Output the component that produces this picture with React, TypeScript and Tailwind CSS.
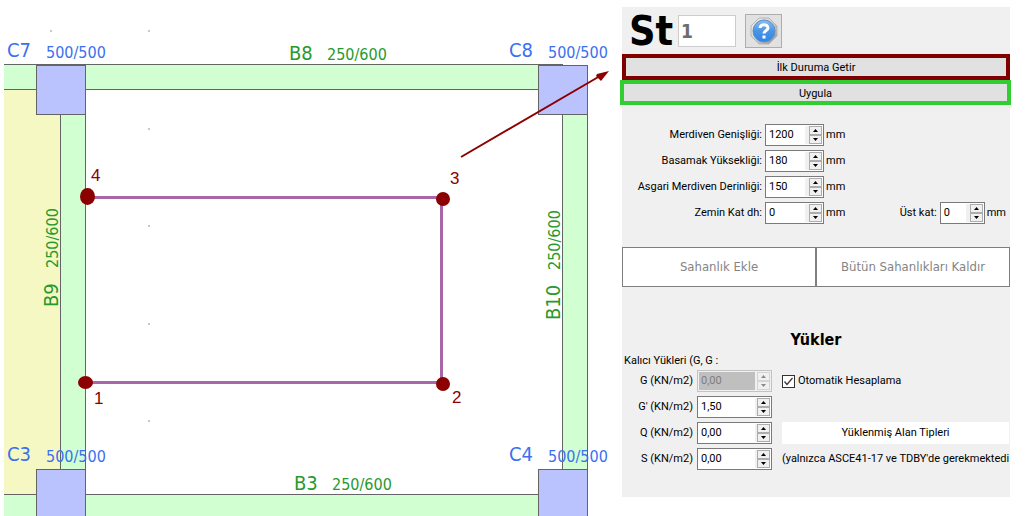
import type { ReactNode } from "react"

const beams = [
  { name: "B8", size: "250/600", x: 289, y: 60, gap: 38, vertical: false },
  { name: "B3", size: "250/600", x: 294, y: 490, gap: 38, vertical: false },
  { name: "B9", size: "250/600", x: 58, y: 307, gap: 39, vertical: true },
  { name: "B10", size: "250/600", x: 560, y: 320, gap: 50, vertical: true },
]

const columns = [
  { name: "C7", x: 7, y: 58 },
  { name: "C8", x: 509, y: 58 },
  { name: "C3", x: 7, y: 462 },
  { name: "C4", x: 509, y: 462 },
]

const corners = [
  { id: 1, x: 85.5, y: 382.5, rx: 7.5, ry: 6.5, tx: 94, ty: 404 },
  { id: 2, x: 443, y: 384, rx: 7, ry: 7, tx: 452, ty: 403 },
  { id: 3, x: 443, y: 199, rx: 7, ry: 7, tx: 450, ty: 184 },
  { id: 4, x: 87.5, y: 196.5, rx: 7.5, ry: 8.5, tx: 91, ty: 181 },
]

function FloorPlan() {
  return (
    <svg
      width="620"
      height="516"
      viewBox="0 0 620 516"
      className="shrink-0"
      role="img"
      aria-label="Kat planı"
    >
      <g shapeRendering="crispEdges">
        {/* Slab and beams */}
        <rect x="4" y="90" width="57" height="404" fill="#f6f8c4" />
        <rect x="4" y="65" width="559" height="24" fill="#d1ffd1" />
        <rect x="4" y="495" width="559" height="21" fill="#d1ffd1" />
        <rect x="61" y="90" width="24" height="404" fill="#d1ffd1" />
        <rect x="563" y="90" width="24" height="404" fill="#d1ffd1" />
        <path
          d="M4 64.5H563M4 89.5H538M4 494.5H538M60.5 115V469M85.5 90V494M562.5 115V469M587.5 115V469"
          stroke="#646464"
          fill="none"
        />

        {/* Columns */}
        {[
          [36.5, 65.5],
          [538.5, 65.5],
          [36.5, 469.5],
          [538.5, 469.5],
        ].map(([x, y]) => (
          <rect key={`${x}-${y}`} x={x} y={y} width="49" height="49" fill="#bbc3ff" stroke="#646464" />
        ))}

        {/* Grid dots */}
        {[
          [50, 30],
          [148, 30],
          [148, 128],
          [148, 225],
          [148, 323],
          [148, 420],
        ].map(([x, y]) => (
          <rect key={`${x}-${y}`} x={x} y={y} width="2" height="2" fill="#c8c8c8" />
        ))}

        <path d="M88 197.5H441.5V382.5H86" stroke="#a868a8" strokeWidth="3" fill="none" />
      </g>

      {/* Labels */}
      <g className="font-['DejaVu_Sans_Condensed','DejaVu_Sans',sans-serif]" fill="#3b70f0">
        {columns.map((c) => (
          <g key={c.name}>
            <text x={c.x} y={c.y - 1} fontSize="20">{c.name}</text>
            <text x={c.x + 39} y={c.y} fontSize="16">500/500</text>
          </g>
        ))}
      </g>
      <g className="font-['DejaVu_Sans_Condensed','DejaVu_Sans',sans-serif]" fill="#279a2c">
        {beams.map((b) => (
          <g key={b.name} transform={`translate(${b.x} ${b.y})${b.vertical ? " rotate(-90)" : ""}`}>
            <text fontSize="20">{b.name}</text>
            <text x={b.gap} fontSize="16">{b.size}</text>
          </g>
        ))}
      </g>

      {/* Stair corners */}
      <g fill="#8b0000" className="font-['Liberation_Sans',Arial,sans-serif]">
        {corners.map((p) => (
          <g key={p.id}>
            <ellipse cx={p.x} cy={p.y} rx={p.rx} ry={p.ry} />
            <text x={p.tx} y={p.ty} fontSize="17">{p.id}</text>
          </g>
        ))}
        <path d="M461 157L600 76" stroke="#8b0000" strokeWidth="2" />
        <path d="M609 71L601 81L599 79L596 76L597 74Z" />
      </g>
    </svg>
  )
}

type SpinnerProps = {
  id: string
  value: string
  size?: "sm" | "md" | "lg"
  disabled?: boolean
}

const spinnerWidths = { sm: "w-[45px]", md: "w-[59px]", lg: "w-[75px]" }

function Spinner({ id, value, size = "md", disabled = false }: SpinnerProps) {
  return (
    <div
      className={`flex h-[22px] shrink-0 border p-px ${spinnerWidths[size]} ${
        disabled ? "border-[#c3c3c3] bg-[#f0f0f0]" : "border-[#7a7a7a] bg-white"
      }`}
    >
      <input
        id={id}
        type="text"
        defaultValue={value}
        disabled={disabled}
        className={`min-w-0 flex-1 px-0.5 ${disabled ? "bg-[#bfbfbf] text-[#7d7d7d]" : "bg-white"}`}
      />
      <div className={`bg-[#f0f0f0] ${size === "lg" ? "w-0.5" : "w-1"}`} />
      <div className="flex w-[13px] flex-col">
        <StepButton label={`${id} artır`} path="M0 3L2.5 0L5 3Z" disabled={disabled} />
        <StepButton label={`${id} azalt`} path="M0 0L2.5 3L5 0Z" disabled={disabled} />
      </div>
    </div>
  )
}

function StepButton({ label, path, disabled }: { label: string; path: string; disabled: boolean }) {
  return (
    <button
      type="button"
      aria-label={label}
      disabled={disabled}
      className={`flex flex-1 items-center justify-center border bg-[#f0f0f0] ${
        disabled ? "border-[#d4d4d4] text-[#8a8a8a]" : "border-[#acacac] text-black"
      }`}
    >
      <svg width="5" height="3" viewBox="0 0 5 3" fill="currentColor">
        <path d={path} />
      </svg>
    </button>
  )
}

function Field({ id, label, value, children }: { id: string; label: string; value: string; children?: ReactNode }) {
  return (
    <div className="flex items-center">
      <label htmlFor={id} className="w-[140px] text-right">{label}</label>
      <div className="w-[3px]" />
      <Spinner id={id} value={value} />
      <span className="pl-0.5">mm</span>
      {children}
    </div>
  )
}

function Load({ id, label, value, disabled, children }: {
  id: string
  label: string
  value: string
  disabled?: boolean
  children?: ReactNode
}) {
  return (
    <div className="flex items-center">
      <label htmlFor={id} className="w-[75px] shrink-0 pr-1 text-right whitespace-nowrap">{label}</label>
      <Spinner id={id} value={value} size="lg" disabled={disabled} />
      <div className="ml-2.5 flex min-w-0 flex-1 items-center">{children}</div>
    </div>
  )
}

function HelpIcon() {
  return (
    <svg width="28" height="28" viewBox="0 0 28 28">
      <defs>
        <linearGradient id="rim" x1="0" y1="0" x2="1" y2="1">
          <stop offset="0" stopColor="#f4f4f4" />
          <stop offset="0.5" stopColor="#d0d0d0" />
          <stop offset="1" stopColor="#8c8c8c" />
        </linearGradient>
        <linearGradient id="face" x1="0" y1="0" x2="0" y2="1">
          <stop offset="0" stopColor="#8cc0f4" />
          <stop offset="0.5" stopColor="#4a94e6" />
          <stop offset="1" stopColor="#2f86e4" />
        </linearGradient>
      </defs>
      <path d="M9 1H19L27 9V19L19 27H9L1 19V9Z" fill="url(#rim)" stroke="#b4b4b4" strokeLinejoin="round" />
      <circle cx="14" cy="14" r="11" fill="url(#face)" stroke="#5d8fc6" />
      <path
        d="M10 11C10 6.500 18 6.500 18 11C18 13.500 14 13.500 14 16.500"
        fill="none"
        stroke="#fff"
        strokeWidth="3"
      />
      <rect x="12.500" y="18.500" width="3" height="3" fill="#fff" />
    </svg>
  )
}

function StairPanel() {
  return (
    <form className="mt-[7px] mr-[15px] ml-0.5 min-w-0 flex-1 self-start bg-[#f0f0f0] pb-[27px]">
      {/* Header */}
      <div className="flex h-[47px] items-center pl-[7px] font-['DejaVu_Sans_Condensed','DejaVu_Sans',sans-serif]">
        <label htmlFor="stair-no" className="w-[49px] text-[41px] leading-10 font-bold">St</label>
        <input
          id="stair-no"
          type="text"
          defaultValue="1"
          disabled
          className="h-8 w-[58px] border border-[#cccccc] bg-white px-0.5 text-[19px] font-bold text-[#6d6d6d]"
        />
        <button
          type="button"
          aria-label="Yardım"
          className="ml-[9px] flex h-[34px] w-[37px] items-center justify-center border border-[#adadad] bg-[#e1e1e1]"
        >
          <HelpIcon />
        </button>
      </div>
      <button type="button" className="block h-[26px] w-full border-4 border-[#800000] bg-[#e1e1e1] pt-0.5">
        İlk Duruma Getir
      </button>
      <div className="-mr-px -ml-0.5">
        <button type="button" className="block h-[25px] w-full border-4 border-[#32cd32] bg-[#e1e1e1] pt-0.5">
          Uygula
        </button>
      </div>

      {/* Dimensions */}
      <div className="mt-[19px] space-y-1">
        <Field id="width" label="Merdiven Genişliği:" value="1200" />
        <Field id="riser" label="Basamak Yüksekliği:" value="180" />
        <Field id="depth" label="Asgari Merdiven Derinliği:" value="150" />
        <Field id="ground" label="Zemin Kat dh:" value="0">
          <div className="ml-auto flex items-center pr-1">
            <label htmlFor="top" className="pr-[3px]">Üst kat:</label>
            <Spinner id="top" value="0" size="sm" />
            <span className="pl-0.5">mm</span>
          </div>
        </Field>
      </div>

      {/* Landings */}
      <div className="mt-[23px] grid h-10 grid-cols-2 font-['DejaVu_Sans_Condensed','DejaVu_Sans',sans-serif] text-[13px] text-[#848484]">
        <button type="button" className="border border-[#7f7f7f] bg-white">Sahanlık Ekle</button>
        <button type="button" className="border border-[#7f7f7f] bg-white">Bütün Sahanlıkları Kaldır</button>
      </div>

      {/* Loads */}
      <h2 className="mt-[43px] text-center font-['DejaVu_Sans_Condensed','DejaVu_Sans',sans-serif] text-base leading-5 font-bold">
        Yükler
      </h2>
      <p className="mt-[3px] pl-0.5 leading-4">Kalıcı Yükleri (G, G :</p>
      <div className="mt-px space-y-1">
        <Load id="g" label="G (KN/m2)" value="0,00" disabled>
          <label className="flex items-center gap-[3px]">
            <span className="relative flex">
              <input
                type="checkbox"
                defaultChecked
                className="peer size-[13px] appearance-none border border-[#333333] bg-white"
              />
              <svg
                viewBox="0 0 13 13"
                className="pointer-events-none absolute inset-0 hidden size-[13px] peer-checked:block"
              >
                <path d="M2.500 6.500L5 9.500L10.500 3" fill="none" stroke="#333" strokeWidth="1.200" />
              </svg>
            </span>
            Otomatik Hesaplama
          </label>
        </Load>
        <Load id="g2" label="G' (KN/m2)" value="1,50" />
        <Load id="q" label="Q (KN/m2)" value="0,00">
          <button type="button" className="mr-px h-[22px] flex-1 bg-white">Yüklenmiş Alan Tipleri</button>
        </Load>
        <Load id="s" label="S (KN/m2)" value="0,00">
          <span className="whitespace-nowrap">
            (yalnızca ASCE41-17 ve TDBY&apos;de gerekmektedi
          </span>
        </Load>
      </div>
    </form>
  )
}

export default function App() {
  return (
    <main className="flex min-h-screen bg-white font-['Roboto','DejaVu_Sans_Condensed',sans-serif] text-[11px] text-black">
      <FloorPlan />
      <StairPanel />
    </main>
  )
}
